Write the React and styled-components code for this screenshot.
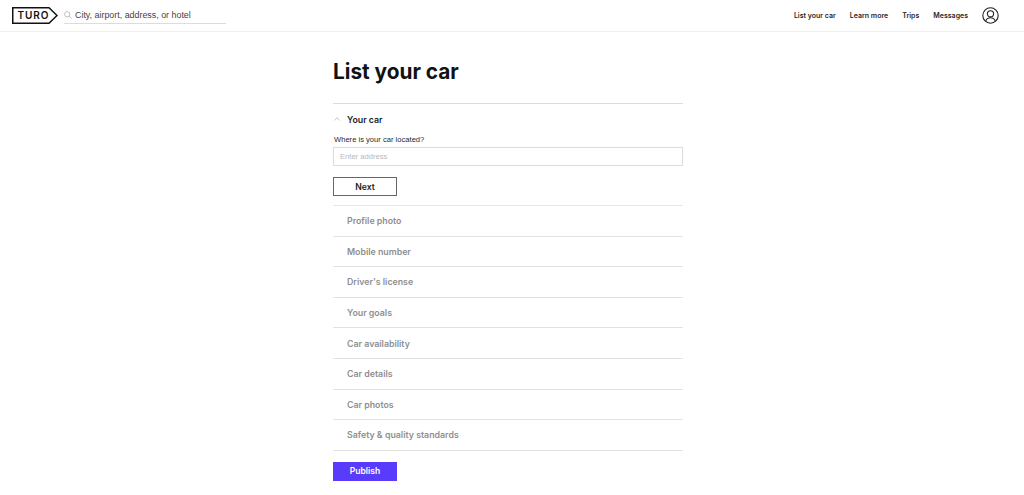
import styled, { createGlobalStyle } from "styled-components";

const GlobalStyle = createGlobalStyle`
  html, body {
    margin: 0;
    padding: 0;
    height: 100%;
    overflow: hidden;
    background: #fff;
    font-family: "Inter", "Liberation Sans", sans-serif;
  }
  * { box-sizing: border-box; }
`;

const Header = styled.header`
  height: 32px;
  display: flex;
  align-items: center;
  justify-content: space-between;
  padding: 0 25px 0 12px;
  border-bottom: 1px solid #efefef;
`;

const HeaderLeft = styled.div`
  display: flex;
  align-items: center;
  gap: 6px;
`;

const Logo = styled.svg`
  width: 46px;
  height: 17px;
  display: block;
`;

const SearchBar = styled.div`
  width: 162px;
  height: 18px;
  display: flex;
  align-items: center;
  gap: 3px;
  margin-top: -1px;
  padding-top: 1px;
  border-bottom: 1px solid #dcdcdc;
  color: #444;
  font-family: "Liberation Sans", sans-serif;
  font-size: 8.9px;
`;

const Nav = styled.nav`
  display: flex;
  align-items: center;
  gap: 14px;
`;

const NavLink = styled.a`
  color: #2a2a2a;
  font-size: 7px;
  font-weight: 600;
`;

const Account = styled.svg`
  width: 17px;
  height: 17px;
  display: block;
`;

const Main = styled.main`
  width: 350px;
  margin-left: 333px;
  padding-top: 27px;
`;

const Title = styled.h1`
  margin: 0 0 19px;
  height: 25px;
  line-height: 25px;
  font-size: 20.8px;
  font-weight: 700;
  color: #121214;
`;

const OpenSection = styled.section`
  border-top: 1px solid #dcdcdc;
  border-bottom: 1px solid #e6e6e6;
  padding-bottom: 9px;
`;

const SectionHead = styled.div`
  height: 30px;
  display: flex;
  align-items: center;
  gap: 7px;
  padding-left: 1px;
  font-size: 8.8px;
  font-weight: 600;
  color: #222;
`;

const FieldLabel = styled.label`
  display: block;
  padding-left: 1px;
  font-family: "Liberation Sans", sans-serif;
  font-size: 7.6px;
  line-height: 11px;
  color: #2b2b2b;
`;

const AddressInput = styled.input`
  display: block;
  width: 100%;
  height: 19px;
  margin-top: 2px;
  padding: 0 6px;
  border: 1px solid #dcdcdc;
  border-radius: 0;
  outline: none;
  font-family: "Liberation Sans", sans-serif;
  font-size: 7.6px;
  &::placeholder { color: #b8b8b8; }
`;

const Button = styled.button`
  display: block;
  width: 64px;
  height: 19px;
  margin-top: 11px;
  padding: 0;
  border-radius: 0;
  border: ${p => (p.$primary ? "none" : "1px solid #666")};
  background: ${p => (p.$primary ? "#593cfb" : "#fff")};
  color: ${p => (p.$primary ? "#fff" : "#222")};
  font-family: inherit;
  font-size: 8.6px;
  font-weight: 600;
`;

const StepRow = styled.div`
  height: 30.6px;
  display: flex;
  align-items: center;
  padding-left: 14px;
  border-bottom: 1px solid #e2e2e2;
  color: #8f8f8f;
  font-size: 8.8px;
  font-weight: 600;
`;

const steps = [
  "Profile photo",
  "Mobile number",
  "Driver's license",
  "Your goals",
  "Car availability",
  "Car details",
  "Car photos",
  "Safety & quality standards",
];

export default function App() {
  return (
    <>
      <GlobalStyle />
      <Header>
        <HeaderLeft>
          <Logo viewBox="0 0 46 17" aria-label="Turo">
            <path d="M.75.75H37L45 8.5l-8 7.75H.75z" fill="none" stroke="#121214" strokeWidth="1.5" />
            <text x="5.5" y="12.2" fontFamily="Inter, sans-serif" fontSize="10" fontWeight="600" letterSpacing=".9" fill="#121214">TURO</text>
          </Logo>
          <SearchBar>
            <svg width="8" height="8" viewBox="0 0 9 9" fill="none" stroke="#aaa" strokeWidth=".8">
              <circle cx="3.6" cy="3.6" r="3" />
              <path d="M5.8 5.8 8.7 8.7" />
            </svg>
            City, airport, address, or hotel
          </SearchBar>
        </HeaderLeft>
        <Nav>
          <NavLink>List your car</NavLink>
          <NavLink>Learn more</NavLink>
          <NavLink>Trips</NavLink>
          <NavLink>Messages</NavLink>
          <Account viewBox="0 0 17 17" fill="none" stroke="#222" strokeWidth="1.1">
            <circle cx="8.5" cy="8.5" r="7.7" />
            <circle cx="8.5" cy="6.8" r="3.1" />
            <path d="M3.6 14.3c.8-2.6 2.7-3.6 4.9-3.6s4.1 1 4.9 3.6" />
          </Account>
        </Nav>
      </Header>
      <Main>
        <Title>List your car</Title>
        <OpenSection>
          <SectionHead>
            <svg width="6" height="4" viewBox="0 0 6 4" fill="none" stroke="#aaa" strokeWidth=".7">
              <path d="M.3 3.4 3 .8l2.7 2.6" />
            </svg>
            Your car
          </SectionHead>
          <FieldLabel>Where is your car located?</FieldLabel>
          <AddressInput placeholder="Enter address" />
          <Button>Next</Button>
        </OpenSection>
        {steps.map(step => (
          <StepRow key={step}>{step}</StepRow>
        ))}
        <Button $primary>Publish</Button>
      </Main>
    </>
  );
}
